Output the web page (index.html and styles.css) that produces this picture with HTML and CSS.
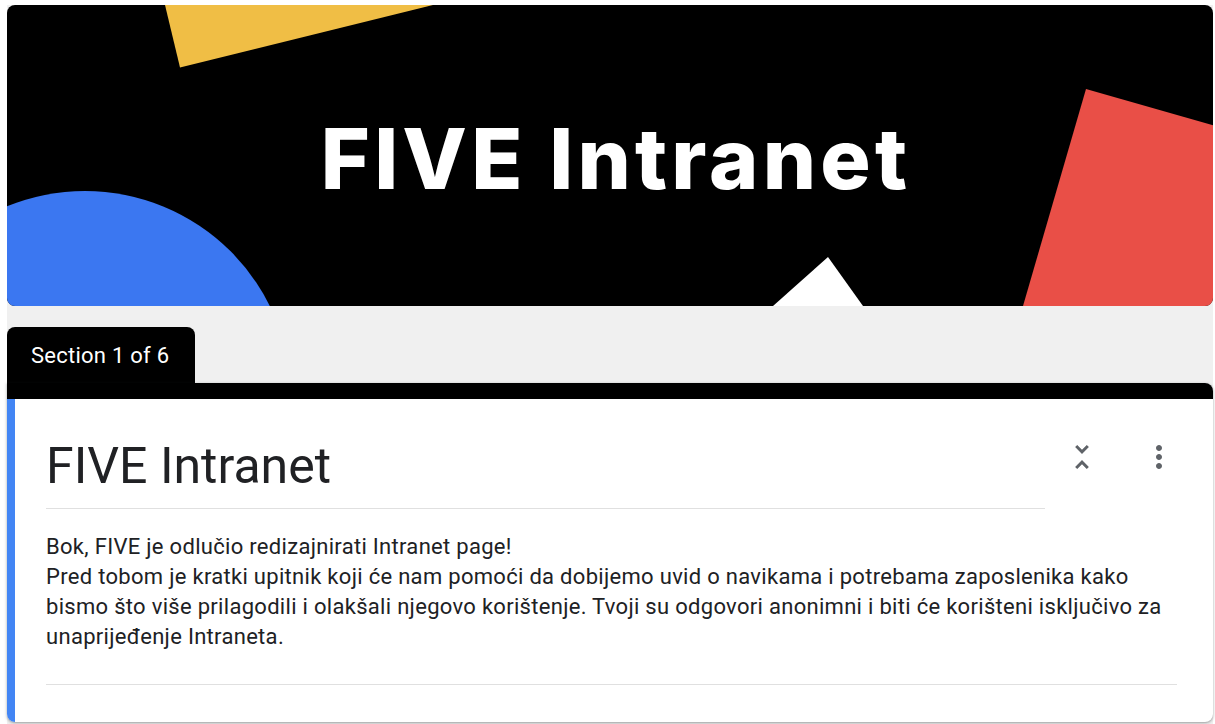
FILE: index.html
```html
<!DOCTYPE html>
<html lang="hr">
<head>
<meta charset="utf-8">
<title>FIVE Intranet</title>
<link rel="stylesheet" href="styles.css">
</head>
<body>
<div class="form">
  <header class="banner">
    <svg class="banner-art" viewBox="0 0 1206 301" preserveAspectRatio="none" aria-hidden="true">
      <polygon points="158,0 426,0 173,62.5" fill="#f0be45"/>
      <circle cx="78" cy="392" r="206" fill="#3b77f1"/>
      <polygon points="821,252 766,301 856,301" fill="#ffffff"/>
      <polygon points="1079,84 1230,127 1230,301 1016,301" fill="#e94f47"/>
    </svg>
    <h1 class="banner-title">FIVE Intranet</h1>
  </header>

  <div class="section-tab">Section 1 of 6</div>

  <section class="card">
    <div class="card-bar"></div>
    <div class="card-body">
      <div class="card-head">
        <div class="card-title">FIVE Intranet</div>
        <button class="icon-btn icon-collapse" type="button" aria-label="Collapse section">
          <svg viewBox="0 0 24 24" width="36" height="36"><path d="M7.41 18.59L8.83 20 12 16.83 15.17 20l1.41-1.41L12 14l-4.59 4.59zm9.18-13.18L15.17 4 12 7.17 8.83 4 7.41 5.41 12 10l4.59-4.59z"/></svg>
        </button>
        <button class="icon-btn icon-more" type="button" aria-label="More options">
          <svg viewBox="0 0 24 24" width="36" height="36"><path d="M12 8c1.1 0 2-.9 2-2s-.9-2-2-2-2 .9-2 2 .9 2 2 2zm0 2c-1.1 0-2 .9-2 2s.9 2 2 2 2-.9 2-2-.9-2-2-2zm0 6c-1.1 0-2 .9-2 2s.9 2 2 2 2-.9 2-2-.9-2-2-2z"/></svg>
        </button>
      </div>
      <div class="card-desc">
        Bok, FIVE je odlučio redizajnirati Intranet page!<br>
        Pred tobom je kratki upitnik koji će nam pomoći da dobijemo uvid o navikama i potrebama zaposlenika kako bismo što više prilagodili i olakšali njegovo korištenje. Tvoji su odgovori anonimni i biti će korišteni isključivo za unaprijeđenje Intraneta.
      </div>
      <div class="card-rule"></div>
    </div>
  </section>
</div>
</body>
</html>
```

FILE: styles.css
```css
html, body {
  margin: 0;
  padding: 0;
  background: #ffffff;
}

body {
  font-family: Roboto, "Liberation Sans", Arial, sans-serif;
  color: #202124;
}

.form {
  margin: 5px 2px 0 7px;
  background: #f0f0f0;
  height: 719px;
}

/* header image */
.banner {
  position: relative;
  height: 301px;
  background: #000000;
  border-radius: 8px;
  overflow: hidden;
  display: flex;
  align-items: center;
  justify-content: center;
}

.banner-art {
  position: absolute;
  inset: 0;
  width: 100%;
  height: 100%;
  display: block;
}

.banner-title {
  position: relative;
  margin: 0;
  padding: 6px 0 0 12px;
  font-family: Inter, "Liberation Sans", sans-serif;
  font-weight: 800;
  font-size: 84px;
  line-height: 1;
  letter-spacing: 4.2px;
  color: #ffffff;
}

/* section tab */
.section-tab {
  margin-top: 21px;
  height: 56px;
  width: fit-content;
  box-sizing: border-box;
  padding: 0 26px 0 24px;
  display: flex;
  align-items: center;
  background: #000000;
  color: #ffffff;
  font-size: 22px;
  letter-spacing: 0.25px;
  border-radius: 8px 8px 0 0;
}

/* section card */
.card {
  background: #ffffff;
  border-radius: 0 8px 8px 8px;
  overflow: hidden;
  box-shadow: 0 1px 2px rgba(60, 64, 67, 0.3), 0 1px 3px 1px rgba(60, 64, 67, 0.15);
}

.card-bar {
  height: 16px;
  background: #000000;
}

.card-body {
  border-left: 8px solid #4285f4;
  padding: 38px 36px 37px 31px;
}

.card-head {
  display: flex;
  align-items: flex-start;
}

.card-title {
  flex: 1;
  font-size: 50px;
  line-height: 58px;
  padding-bottom: 13px;
  border-bottom: 1px solid #e0e0e0;
}

.icon-btn {
  border: 0;
  padding: 0;
  background: none;
  width: 36px;
  height: 36px;
  margin-top: 2px;
  fill: #5f6368;
  display: flex;
}

.icon-collapse {
  margin-left: 19px;
}

.icon-more {
  margin-left: 41px;
}

.card-desc {
  margin-top: 23px;
  font-size: 22px;
  line-height: 30px;
  letter-spacing: 0.3px;
}

.card-rule {
  margin-top: 32px;
  height: 1px;
  background: #e0e0e0;
}
```
